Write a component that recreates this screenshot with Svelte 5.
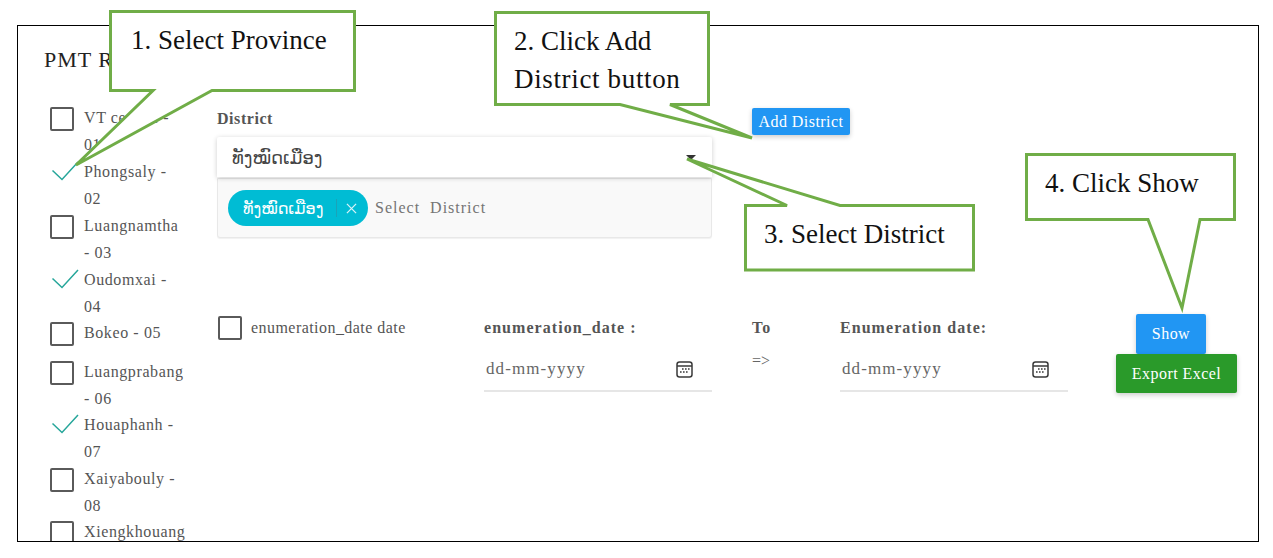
<script>
  const provinces = [
    { name: 'VT central - 01', checked: false, h: 54 },
    { name: 'Phongsaly - 02', checked: true, h: 54 },
    { name: 'Luangnamtha - 03', checked: false, h: 54 },
    { name: 'Oudomxai - 04', checked: true, h: 53 },
    { name: 'Bokeo - 05', checked: false, h: 39 },
    { name: 'Luangprabang - 06', checked: false, h: 53 },
    { name: 'Houaphanh - 07', checked: true, h: 54 },
    { name: 'Xaiyabouly - 08', checked: false, h: 53 },
    { name: 'Xiengkhouang', checked: false, h: 24 }
  ];
  const dates = ['enumeration_date :', 'Enumeration date:'];
</script>

{#snippet calendar()}
  <svg class="cal" viewBox="0 0 17 17" width="17" height="17" aria-hidden="true">
    <rect x="1" y="1" width="15" height="15" rx="2.5" fill="none" stroke="#3a3a3a" stroke-width="1.5" />
    <path d="M1 5h15" stroke="#3a3a3a" stroke-width="1.5" />
    <path d="M6 8h1.6M9 8h1.6M12 8h1.6M4 11h1.6M7 11h1.6M10 11h1.6" stroke="#3a3a3a" stroke-width="1.6" />
  </svg>
{/snippet}

<main class="frame">
  <h1>PMT Report</h1>
  <div class="body">
    <aside class="provinces">
      {#each provinces as p}
        <div class="prov" style="height:{p.h}px">
          {#if p.checked}
            <svg class="tick" viewBox="0 0 28 20" width="28" height="20" aria-hidden="true">
              <path d="M1.5 9.5 L11 18.5 L27 1" fill="none" stroke="#26a69a" stroke-width="1.5" />
            </svg>
          {:else}
            <span class="box"></span>
          {/if}
          <span class="plabel">{p.name}</span>
        </div>
      {/each}
    </aside>

    <section class="content">
      <div class="district">
        <div class="dcol">
          <div class="dlabel">District</div>
          <div class="select">
            <span class="lao">ທັງໝົດເມືອງ</span>
            <span class="caret"></span>
          </div>
          <div class="panel">
            <span class="chip">
              <span class="lao">ທັງໝົດເມືອງ</span>
              <span class="sep"></span>
              <svg viewBox="0 0 12 12" width="11" height="11" aria-hidden="true"><path d="M1 1l10 10M11 1L1 11" stroke="#d7f3f8" stroke-width="1.4" /></svg>
            </span>
            <span class="ph">Select&nbsp; District</span>
          </div>
        </div>
        <button class="btn add">Add District</button>
      </div>

      <div class="dates">
        <div class="enum">
          <span class="box"></span>
          <span class="elabel">enumeration_date date</span>
        </div>
        <div class="dfield">
          <div class="flabel">{dates[0]}</div>
          <div class="finput"><span>dd-mm-yyyy</span>{@render calendar()}</div>
        </div>
        <div class="to">
          <div class="flabel">To</div>
          <div class="arrow">=&gt;</div>
        </div>
        <div class="dfield">
          <div class="flabel">{dates[1]}</div>
          <div class="finput"><span>dd-mm-yyyy</span>{@render calendar()}</div>
        </div>
        <div class="actions">
          <button class="btn show">Show</button>
          <button class="btn export">Export Excel</button>
        </div>
      </div>
    </section>
  </div>
</main>

<svg class="notes" viewBox="0 0 1273 558" width="1273" height="558">
  <g fill="#fff" stroke="#70ad47" stroke-width="3">
    <path d="M110.5 11.5H354.5V90.5H212L76 165L153 90.5H110.5Z" />
    <path d="M495.5 12.5H708.5V104.5H670L752 138L620 104.5H495.5Z" />
    <path d="M745.5 205.5H787L687 159L840 205.5H973.5V270H745.5Z" />
    <path d="M1026.5 154.5H1234.5V219.5H1200L1182 308L1148 219.5H1026.5Z" />
  </g>
  <g class="ntext">
    <text x="131" y="49">1. Select Province</text>
    <text x="514" y="50">2. Click Add</text>
    <text x="514" y="88" class="wide2">District button</text>
    <text x="764" y="243">3. Select District</text>
    <text x="1045" y="192">4. Click Show</text>
  </g>
</svg>

<style>
  :global(body) {
    margin: 0;
    background: #fff;
    height: 558px;
    overflow: hidden;
  }
  .frame {
    box-sizing: border-box;
    margin: 25px 0 0 17px;
    width: 1242px;
    height: 517px;
    border: 1px solid #000;
    overflow: hidden;
    padding: 20px 0 0 26px;
    font-family: "Liberation Serif", serif;
    color: #555;
    font-size: 16px;
  }
  h1 {
    margin: 0;
    font-size: 22px;
    line-height: 28px;
    font-weight: 400;
    color: #222;
    letter-spacing: 1px;
  }
  .body {
    display: flex;
    margin-top: 33px;
  }
  .provinces {
    width: 173px;
    flex: none;
    padding-left: 6px;
    box-sizing: border-box;
  }
  .prov {
    display: flex;
    align-items: flex-start;
    gap: 10px;
    position: relative;
  }
  .box {
    display: block;
    width: 20px;
    height: 20px;
    flex: none;
    border: 2px solid #5a5a5a;
    border-radius: 2px;
  }
  .tick {
    position: absolute;
    left: 1px;
    top: 0;
  }
  .plabel {
    margin-left: 34px;
    width: 104px;
    line-height: 27px;
    letter-spacing: 0.6px;
    margin-top: -3px;
  }
  .prov .box + .plabel {
    margin-left: 0;
  }
  .content {
    flex: 1;
    min-width: 0;
  }
  .district {
    display: flex;
    align-items: flex-start;
  }
  .dcol {
    width: 495px;
  }
  .dlabel {
    font-weight: 700;
    line-height: 20px;
    letter-spacing: 0.55px;
    margin-bottom: 8px;
    margin-top: 2px;
  }
  .select {
    height: 40px;
    box-sizing: border-box;
    padding: 0 15px;
    display: flex;
    align-items: center;
    justify-content: space-between;
    background: #fff;
    box-shadow: 0 1px 5px rgba(0, 0, 0, 0.2);
    border-radius: 2px 2px 0 0;
    position: relative;
  }
  .lao {
    font-family: "DejaVu Sans", "Noto Sans", sans-serif;
  }
  .select .lao {
    font-size: 18px;
    color: #444;
  }
  .caret {
    width: 0;
    height: 0;
    border-left: 5px solid transparent;
    border-right: 5px solid transparent;
    border-top: 5px solid #333;
    margin-right: 1px;
  }
  .panel {
    box-sizing: border-box;
    height: 60px;
    background: #f9f9f9;
    border: 1px solid #e8e8e8;
    border-radius: 0 0 3px 3px;
    display: flex;
    align-items: center;
    padding-left: 10px;
    gap: 7px;
    margin-top: 1px;
    box-shadow: 0 1px 1px rgba(0, 0, 0, 0.06);
  }
  .chip {
    box-sizing: border-box;
    width: 140px;
    height: 36px;
    border-radius: 18px;
    background: #00bcd4;
    color: #fff;
    display: flex;
    align-items: center;
    padding-left: 15px;
  }
  .chip .lao {
    font-size: 16px;
    width: 93px;
    white-space: nowrap;
  }
  .sep {
    width: 1px;
    height: 18px;
    background: #1aa3b8;
    margin: 0 9px 0 0;
    flex: none;
  }
  .chip svg {
    flex: none;
  }
  .ph {
    color: #757575;
    letter-spacing: 1px;
  }
  .btn {
    font-family: "Liberation Serif", serif;
    font-size: 16px;
    color: #fff;
    border: 0;
    border-radius: 2px;
    padding: 0;
    box-shadow: 0 2px 5px rgba(0, 0, 0, 0.2);
    letter-spacing: 0.45px;
  }
  .add {
    background: #2196f3;
    width: 98px;
    height: 27px;
    margin: 1px 0 0 40px;
  }
  .dates {
    display: flex;
    align-items: flex-start;
    margin-top: 78px;
  }
  .enum {
    display: flex;
    align-items: flex-start;
    gap: 9px;
    width: 266px;
    flex: none;
    margin-left: 1px;
  }
  .elabel {
    line-height: 24px;
    letter-spacing: 0.45px;
  }
  .dfield {
    width: 228px;
    flex: none;
  }
  .flabel {
    font-weight: 700;
    line-height: 24px;
    letter-spacing: 1.05px;
    color: #555;
  }
  .finput {
    margin-top: 8px;
    height: 44px;
    box-sizing: border-box;
    display: flex;
    align-items: center;
    justify-content: space-between;
    padding: 0 19px 0 2px;
    border-bottom: 2px solid #e6e6e6;
    letter-spacing: 1.1px;
    color: #666;
    font-size: 17px;
  }
  .cal {
    display: block;
    flex: none;
  }
  .to {
    width: 88px;
    flex: none;
    margin-left: 40px;
  }
  .arrow {
    line-height: 20px;
    margin-top: 11px;
    color: #666;
  }
  .actions {
    display: flex;
    flex-direction: column;
    align-items: flex-start;
    width: 121px;
    margin-left: 48px;
    margin-top: -2px;
    flex: none;
  }
  .show {
    background: #2196f3;
    width: 70px;
    height: 40px;
    margin-left: 20px;
  }
  .export {
    background: #2a9a2a;
    width: 121px;
    height: 39px;
  }
  .notes {
    position: absolute;
    left: 0;
    top: 0;
    pointer-events: none;
  }
  .ntext text {
    font-family: "Liberation Serif", serif;
    font-size: 27px;
    fill: #111;
  }
  .ntext .wide2 {
    letter-spacing: 0.65px;
  }
</style>
